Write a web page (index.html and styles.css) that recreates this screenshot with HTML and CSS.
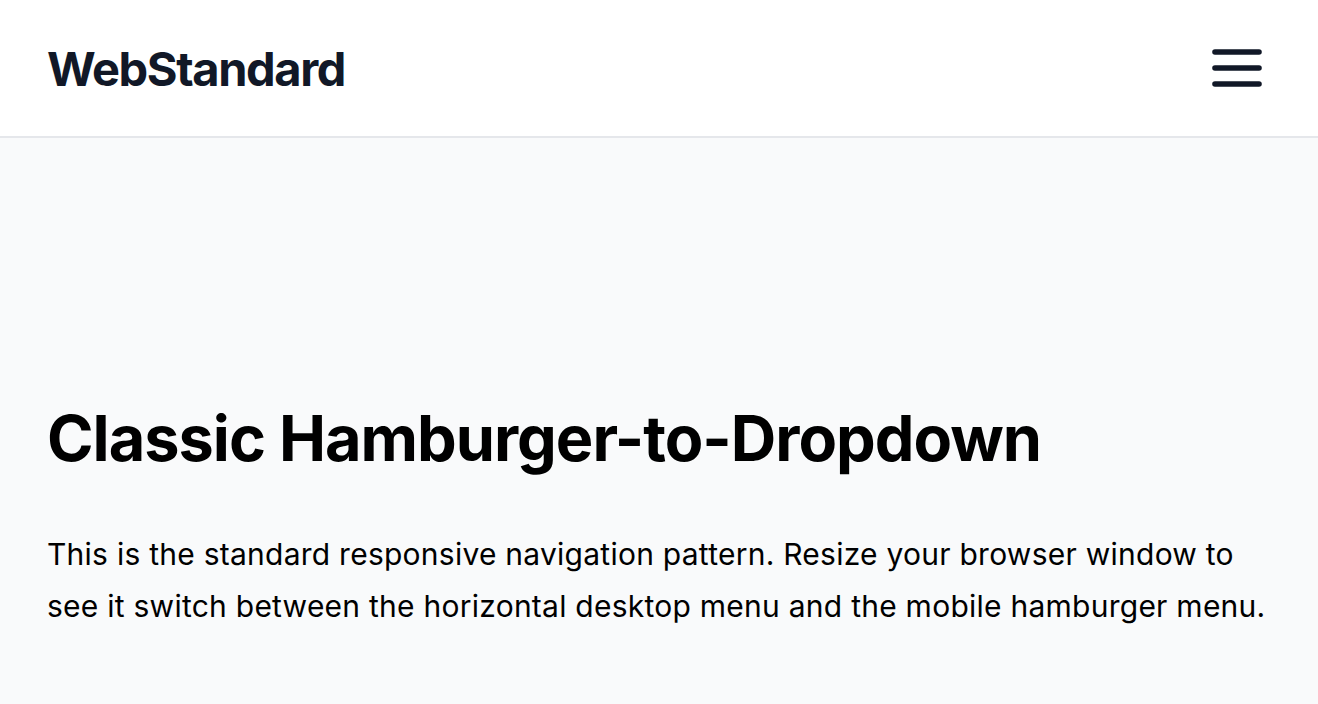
FILE: index.html
```html
<!DOCTYPE html>
<html lang="en">
<head>
<meta charset="utf-8">
<title>WebStandard</title>
<link rel="stylesheet" href="styles.css">
</head>
<body>
<header class="site-header">
  <div class="logo">WebStandard</div>
  <button class="menu-btn" aria-label="Open menu">
    <svg class="menu-icon" viewBox="0 0 50 38" width="50" height="38">
      <path d="M3 3h44M3 19h44M3 35h44" stroke="#111827" stroke-width="5.6" stroke-linecap="round" fill="none"/>
    </svg>
  </button>
</header>
<main class="content">
  <h1 class="title">Classic Hamburger-to-Dropdown</h1>
  <p class="lead">This is the standard responsive navigation pattern. Resize your browser window to see it switch between the horizontal desktop menu and the mobile hamburger menu.</p>
</main>
</body>
</html>
```

FILE: styles.css
```css
html, body {
  margin: 0;
  padding: 0;
  height: 100%;
}
body {
  font-family: Inter, "Noto Sans", sans-serif;
  background: #f9fafb;
  color: #000;
  display: flex;
  flex-direction: column;
}
.site-header {
  background: #fff;
  height: 138px;
  box-sizing: border-box;
  border-bottom: 2px solid #e5e7eb;
  display: flex;
  align-items: center;
  justify-content: space-between;
  padding: 0 56px 0 47px;
  flex-shrink: 0;
}
.logo {
  font-size: 47px;
  font-weight: 700;
  color: #111827;
  letter-spacing: -1.4px;
}
.menu-btn {
  background: none;
  border: 0;
  padding: 0;
  display: flex;
  cursor: pointer;
}
.content {
  padding: 0 47px;
  flex: 1;
}
.title {
  margin: 266px 0 0;
  font-size: 63px;
  font-weight: 700;
  line-height: 1.1;
  letter-spacing: -1px;
}
.lead {
  margin: 55px 0 0;
  font-size: 30px;
  line-height: 52px;
  letter-spacing: 0.25px;
}
```
